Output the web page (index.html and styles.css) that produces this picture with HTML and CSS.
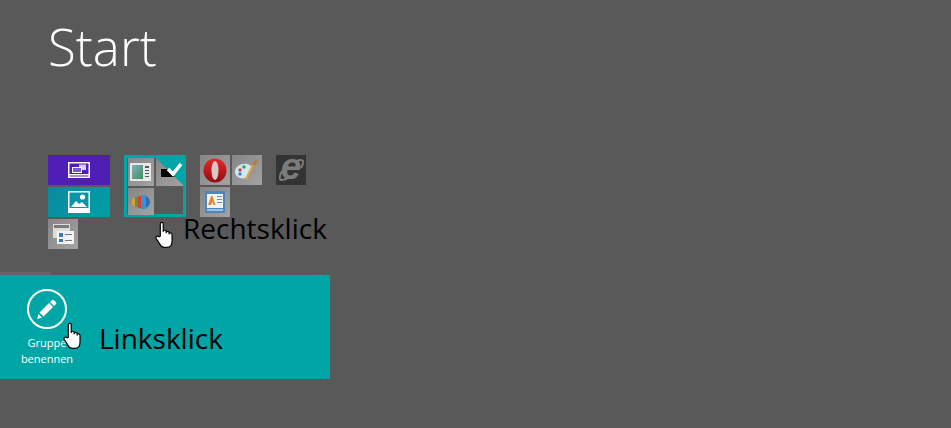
FILE: index.html
```html
<!doctype html>
<html>
<head>
  <title>Start</title>
  <link rel="stylesheet" href="styles.css">
</head>
<body>
  <header class="top">
    <h1>Start</h1>
  </header>

  <main class="groups">
    <!-- First group: two wide tiles and a small one -->
    <section class="group group-first">
      <div class="tile wide purple">
        <svg width="22" height="16" viewBox="0 0 22 16"><path fill="#fff" d="M0 0h22v16H0z"/><path fill="#4f1fb5" d="M1.500 1.500h19V12h-19zM1.500 13.500h19v1h-19z"/><path fill="#d8d0ee" d="M11 2.500h7V8h-7z"/><path fill="#fff" d="M4 5h10v6H4z"/><path fill="#7d5cc8" d="M5 6h8v4H5z"/></svg>
      </div>
      <div class="tile wide teal">
        <svg width="22" height="22" viewBox="0 0 22 22"><path fill="#fff" d="M0 0h22v22H0z"/><path fill="#0b94a6" d="M1.500 1.500h19V17h-19z"/><circle cx="14.500" cy="6" r="2.600" fill="#fff"/><path fill="#fff" d="M3 16l5-6 3 3 3-2 5 5z"/></svg>
      </div>
      <div class="tile">
        <svg width="24" height="22" viewBox="0 0 24 22"><path fill="#dcdcdc" d="M2 1h17v14H2z"/><path fill="#7a7a7a" d="M3 2h15v3H3z"/><path fill="#f4f4f4" d="M6 8h17v13H6z"/><path fill="#3a78b0" d="M8 10h4v4H8zM8 16h4v3H8z"/><path fill="#777" d="M14 11h7v1h-7zM14 17h7v1h-7z"/></svg>
      </div>
    </section>

    <!-- Selected group with check mark in the corner -->
    <section class="group-selected">
      <div class="tile mini">
        <svg width="22" height="20" viewBox="0 0 22 20"><defs><linearGradient id="news" x1="0" y1="0" x2="1" y2="1"><stop offset="0" stop-color="#7fb0c0"/><stop offset="1" stop-color="#3f8f5e"/></linearGradient></defs><path fill="#e8e8e8" d="M0 1h21v18H0z"/><path fill="url(#news)" d="M2 3h11v14H2z"/><path fill="#556" d="M15 4h4v2h-4zM15 8h4v1h-4zM15 11h4v1h-4zM15 14h4v1h-4z"/></svg>
      </div>
      <div class="tile mini">
        <span class="black-corner"></span>
      </div>
      <div class="tile mini">
        <svg width="20" height="16" viewBox="0 0 20 16"><path fill="#e89a2c" d="M1 6c0-1 1-2 3-2v8c-2 0-3-1-3-2z"/><path fill="#3aa24a" d="M4 3h3v10H4z"/><path fill="#d8402c" d="M7 2h3v12H7z"/><path fill="#3b8fd8" d="M10 1h5v14h-5z"/><path fill="#2a6fb8" d="M15 2c2 1 4 3 4 6s-2 5-4 6z"/></svg>
      </div>
      <div class="mini empty"></div>
      <svg class="check-corner" width="33" height="33" viewBox="0 0 33 33">
        <path fill="#00a6a6" d="M0 0h33v33z"/>
        <path fill="none" stroke="#fff" stroke-width="3.600" d="M15 14l5 5 8-10"/>
      </svg>
    </section>

    <section class="group group-third">
      <div class="tile">
        <svg width="24" height="25" viewBox="0 0 24 25"><defs><linearGradient id="opera" x1="0" y1="0" x2="0" y2="1"><stop offset="0" stop-color="#e8282c"/><stop offset="1" stop-color="#8e0c12"/></linearGradient></defs><ellipse cx="12" cy="12.500" rx="11.500" ry="12" fill="url(#opera)"/><ellipse cx="12" cy="12.500" rx="3.500" ry="9.500" fill="#d8c8c4"/></svg>
      </div>
      <div class="tile">
        <svg width="26" height="24" viewBox="0 0 26 24"><path fill="#cfe6f5" d="M1 14c0-6 7-9 12-8 5 1 6 5 3 7-2 2-1 4-3 6-3 3-12 1-12-5z"/><circle cx="6" cy="12" r="1.700" fill="#d8402c"/><circle cx="10" cy="9" r="1.700" fill="#3aa24a"/><circle cx="6" cy="16" r="1.700" fill="#3b7fd0"/><path stroke="#e8a030" stroke-width="2" d="M12 21l7-14"/><path fill="#b08048" d="M18 6l3-5 3 2-3 5z"/></svg>
      </div>
      <div class="tile">
        <svg width="20" height="24" viewBox="0 0 20 24"><path fill="#4f86c0" d="M0 1h20v22H0z"/><path fill="#eef3f8" d="M2 4h16v14H2z"/><path fill="#e8862c" d="M3 15l3-9h1.500l3 9H8.500l-1-3-1.500 3z"/><path fill="#6a8fb8" d="M12 6h5v1h-5zM12 9h5v1h-5zM12 12h5v1h-5z"/><path fill="#9fc0e0" d="M2 19h16v2H2z"/></svg>
      </div>
    </section>

    <section class="group">
      <div class="tile dark">
        <span class="ie-mark">e</span>
        <svg class="ie-ring" width="30" height="30" viewBox="0 0 30 30"><path fill="none" stroke="#7c7c7c" stroke-width="2" d="M6 16C3 21 3 25 6 25c2 0 4-1 6-2M19 7c3-2 7-3 8-1 1 2-1 5-2 7"/></svg>
      </div>
    </section>

    <span class="note note-right">Rechtsklick</span>
    <svg class="hand hand-right" width="20" height="27" viewBox="0 0 17 23"><use href="#hand"/></svg>
  </main>

  <div class="edge"></div>
  <footer class="appbar">
    <div class="command">
      <span class="ring">
        <svg width="20" height="20" viewBox="0 0 20 20"><path fill="#fff" d="M0 20l1.500-5 3.500 3.500zM2.500 13.500L12 4l4 4-9.500 9.500zM13 3l1.800-1.800c.7-.7 1.500-.7 2.200 0l1.800 1.800c.7.700.7 1.500 0 2.200L17 7z"/></svg>
      </span>
      <span class="command-label">Gruppe<br>benennen</span>
    </div>
    <span class="note">Linksklick</span>
    <svg class="hand hand-left" width="20" height="27" viewBox="0 0 17 23"><use href="#hand"/></svg>
  </footer>

  <svg class="defs" width="0" height="0">
    <symbol id="hand" viewBox="0 0 17 23">
      <path fill="#fff" stroke="#000" stroke-width="1" stroke-linejoin="round" d="M4.500 13V2.500C4.500 .8 7 .8 7 2.500V9c0-1.500 2.500-1.500 2.500 0v1c0-1.500 2.500-1.500 2.500 0v1c0-1.300 2.500-1.300 2.500 .5V17c0 3-1.500 5.500-4.500 5.500H8c-2 0-3-1-4-3L1 15c-.8-1.700 1.500-3 2.500-1.500z"/>
    </symbol>
  </svg>
</body>
</html>
```

FILE: styles.css
```css
* {
  box-sizing: border-box;
  margin: 0;
  padding: 0;
}

html, body { height: 100% }

body {
  background: #595959;
  color: #fff;
  font-family: "Open Sans", sans-serif;
  overflow: hidden;
}

.top {
  height: 155px;
  padding: 14px 0 0 48px;
}

h1 {
  font-size: 51px;
  font-weight: 300;
  line-height: 64px;
}

.groups {
  position: relative;
  display: flex;
  align-items: flex-start;
  gap: 14px;
  height: 117px;
  padding-left: 48px;
}

.group {
  display: grid;
  grid-template-columns: 30px 30px;
  grid-auto-rows: 30px;
  gap: 2px;
  width: 30px;
}

.group-first { width: 62px }
.group-third { width: 62px }

.tile {
  display: flex;
  align-items: center;
  justify-content: center;
  width: 30px;
  height: 30px;
  background: linear-gradient(135deg, #858585, #a3a3a3);
}

.tile.wide {
  width: 62px;
  grid-column: span 2;
}

.tile.purple { background: #4f1fb5 }
.tile.teal { background: linear-gradient(135deg, #0b8a9c, #009fa8) }

.tile.dark {
  position: relative;
  background: #333;
}

.ie-mark {
  color: #7c7c7c;
  font-family: "Liberation Sans", sans-serif;
  font-size: 37px;
  font-style: italic;
  font-weight: 700;
  line-height: 30px;
  margin-top: -6px;
}

.ie-ring {
  position: absolute;
  top: 0;
  left: 0;
}

/* selected group */
.group-selected {
  position: relative;
  display: grid;
  grid-template-columns: 26px 27px;
  grid-template-rows: 28px 27px;
  gap: 2px;
  width: 62px;
  height: 62px;
  padding: 3px 3px 3px 4px;
  box-shadow: inset 0 0 0 3px #00a6a6;
}

.tile.mini {
  position: relative;
  width: auto;
  height: auto;
}

.black-corner {
  position: absolute;
  left: 5px;
  top: 11px;
  width: 14px;
  height: 8px;
  background: #000;
}

.check-corner {
  position: absolute;
  top: 0;
  right: 0;
}

/* annotations */
.note {
  color: #000;
  font-size: 28px;
  line-height: 36px;
}

.note-right {
  position: absolute;
  left: 183px;
  top: 55px;
}

.hand {
  position: absolute;
}

.hand-right {
  left: 155px;
  top: 66px;
}

.hand-left {
  left: 63px;
  top: 47px;
}

.edge {
  width: 50px;
  height: 3px;
  background: #666;
}

.appbar {
  position: relative;
  display: flex;
  align-items: flex-start;
  width: 330px;
  height: 104px;
  background: #00a6a6;
}

.command {
  display: flex;
  flex-direction: column;
  align-items: center;
  width: 94px;
  padding-top: 14px;
}

.ring {
  display: flex;
  align-items: center;
  justify-content: center;
  width: 40px;
  height: 40px;
  border: 2.500px solid #fff;
  border-radius: 50%;
}

.command-label {
  margin-top: 6px;
  font-size: 11px;
  line-height: 16px;
  text-align: center;
}

.appbar .note {
  margin: 45px 0 0 5px;
}

.defs { position: absolute }
```
